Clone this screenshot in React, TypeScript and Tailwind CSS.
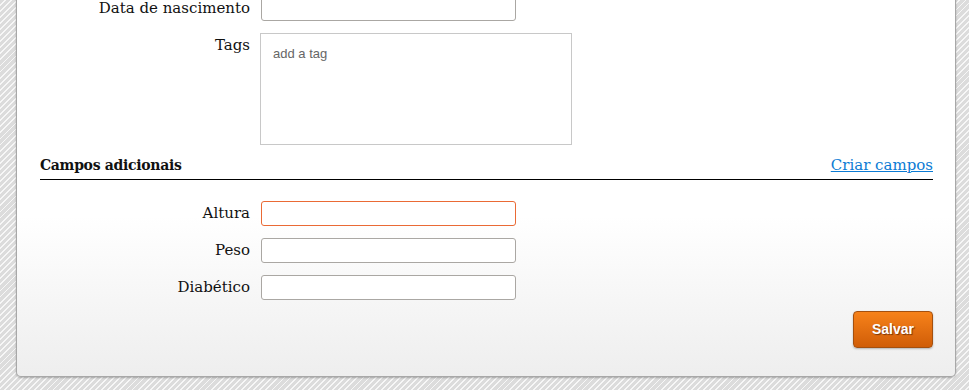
import React from "react";

const serif = "font-['DejaVu_Serif',serif]";

function Row({ label, children }: { label: string; children: React.ReactNode }) {
  return (
    <div className="flex items-start">
      <label className={`w-[210px] shrink-0 text-right text-[15px] leading-[25px] text-[#111] ${serif}`}>
        {label}
      </label>
      <div className="ml-[11px]">{children}</div>
    </div>
  );
}

function TextInput({ error }: { error?: boolean }) {
  return (
    <input
      type="text"
      className={`block h-[25px] w-[255px] rounded-[3px] border bg-white px-2 outline-none ${
        error ? "border-[#ea6a35]" : "border-[#aaa7a3]"
      }`}
    />
  );
}

export default function App() {
  return (
    <div className="h-[390px] w-[969px] overflow-hidden bg-[repeating-linear-gradient(135deg,#dcdcdc_0px,#dcdcdc_3px,#f7f7f7_3px,#f7f7f7_4.3px)]">
      <div className="ml-[16px] mr-[13px] -mt-[4px] rounded-b-[5px] border border-t-0 border-[#a8a8a8] bg-gradient-to-b from-white from-[58%] to-[#eeeeee] pl-[23px] pr-[22px] pb-[28px] shadow-[0_1px_2px_rgba(0,0,0,0.25)]">
        <div className="flex flex-col gap-[12px]">
          <Row label="Data de nascimento">
            <TextInput />
          </Row>
          <Row label="Tags">
            <div className="-ml-px h-[112px] w-[312px] border border-[#c8c8c8] bg-white px-[12px] pt-[12px] font-['Liberation_Sans',Arial,sans-serif] text-[13px] leading-[16px] text-[#666]">
              add a tag
            </div>
          </Row>
        </div>

        <div className={`mt-[10px] flex items-end justify-between border-b border-black pb-[3px] ${serif}`}>
          <h3 className="text-[14px] font-bold leading-[21px] tracking-[-0.3px] text-[#111]">Campos adicionais</h3>
          <a href="#" className="text-[15px] leading-[21px] text-[#0b7bd4] underline">
            Criar campos
          </a>
        </div>

        <div className="mt-[21px] flex flex-col gap-[12px]">
          <Row label="Altura">
            <TextInput error />
          </Row>
          <Row label="Peso">
            <TextInput />
          </Row>
          <Row label="Diabético">
            <TextInput />
          </Row>
        </div>

        <div className="mt-[11px] flex justify-end">
          <button className="h-[37px] w-[80px] rounded-[4px] border border-[#a4500f] bg-gradient-to-b from-[#f7821a] to-[#d05d07] font-['Liberation_Sans',Arial,sans-serif] text-[14px] font-bold text-white shadow-[0_1px_2px_rgba(0,0,0,0.25)] [text-shadow:1px_1px_1px_rgba(80,30,0,0.7)]">
            Salvar
          </button>
        </div>
      </div>
    </div>
  );
}
